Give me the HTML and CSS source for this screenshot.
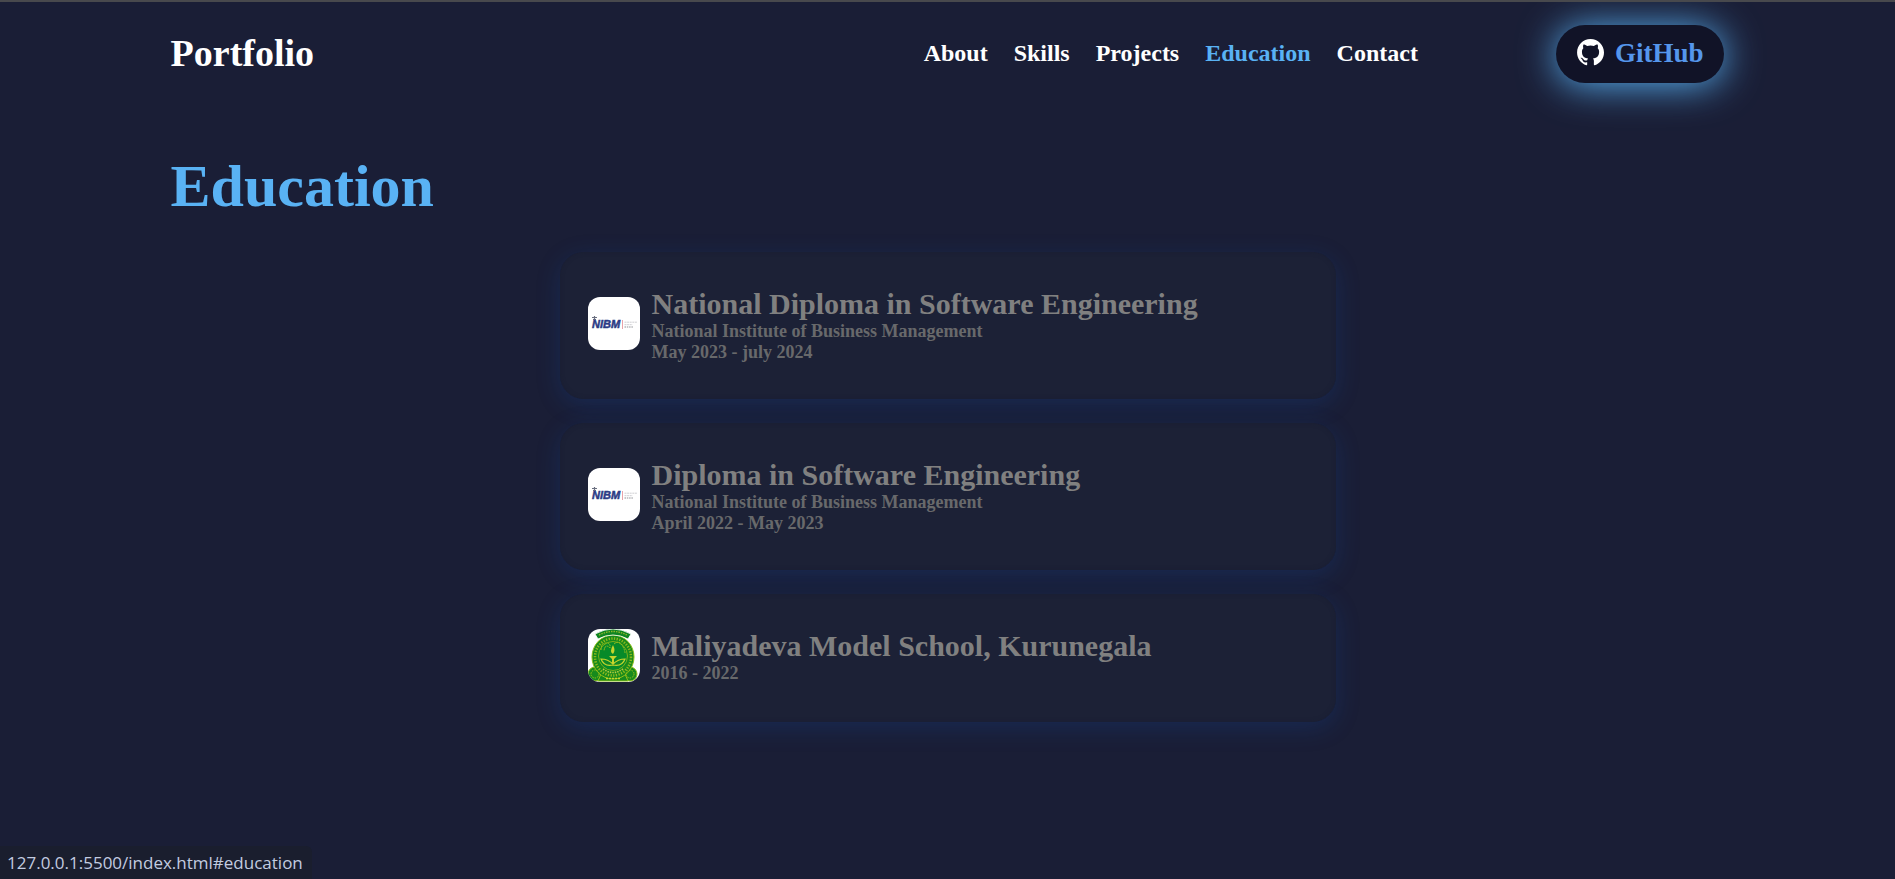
FILE: index.html
```html
<!DOCTYPE html>
<html lang="en">
<head>
<meta charset="utf-8">
<meta name="viewport" content="width=device-width, initial-scale=1">
<title>Portfolio</title>
<link rel="stylesheet" href="styles.css">
</head>
<body>
<header class="header">
  <a class="logo" href="#home">Portfolio</a>
  <nav class="nav">
    <a href="#about">About</a>
    <a href="#skills">Skills</a>
    <a href="#projects">Projects</a>
    <a class="active" href="#education">Education</a>
    <a href="#contact">Contact</a>
  </nav>
  <a class="github" href="#github">
    <svg class="github-icon" viewBox="2 2 20 20" aria-hidden="true"><path fill="#fff" fill-rule="evenodd" d="M12.026 2c-5.509 0-9.974 4.465-9.974 9.974 0 4.406 2.857 8.145 6.821 9.465.499.09.679-.217.679-.481 0-.237-.008-.865-.011-1.696-2.775.602-3.361-1.338-3.361-1.338-.452-1.152-1.107-1.459-1.107-1.459-.905-.619.069-.605.069-.605 1.002.07 1.527 1.028 1.527 1.028.89 1.524 2.336 1.084 2.902.829.091-.645.351-1.085.635-1.334-2.214-.251-4.542-1.107-4.542-4.93 0-1.087.389-1.979 1.024-2.675-.101-.253-.446-1.268.099-2.64 0 0 .837-.269 2.742 1.021a9.582 9.582 0 0 1 2.496-.336 9.554 9.554 0 0 1 2.496.336c1.906-1.291 2.742-1.021 2.742-1.021.545 1.372.203 2.387.099 2.64.64.696 1.024 1.587 1.024 2.675 0 3.833-2.33 4.675-4.552 4.922.355.308.675.916.675 1.846 0 1.334-.012 2.41-.012 2.737 0 .267.178.577.687.479C19.146 20.115 22 16.379 22 11.974 22 6.465 17.535 2 12.026 2z"/></svg>
    <span>GitHub</span>
  </a>
</header>
<main class="education" id="education">
  <h1>Education</h1>
  <div class="cards">
    <article class="card">
      <svg class="badge" viewBox="0 0 52 53" role="img" aria-label="NIBM">
        <rect width="52" height="53" fill="#fff"/>
        <path d="M4 20.500h5M6.500 19v4M5 22.500h3" stroke="#6b7080" stroke-width="1.200"/>
        <text class="nibm" x="4" y="31">NIBM</text>
        <path d="M34.500 23v9" stroke="#e9a3aa" stroke-width="1"/>
        <path d="M36.500 25.200h12.500M36.500 27.700h8" stroke="#c3c3c8" stroke-width=".8" stroke-dasharray="2 .6"/>
        <path d="M36.500 30h9" stroke="#8f9095" stroke-width="1.200" stroke-dasharray="1.500 .8"/>
      </svg>
      <div class="details">
        <h2>National Diploma in Software Engineering</h2>
        <p>National Institute of Business Management</p>
        <p>May 2023 - july 2024</p>
      </div>
    </article>
    <article class="card">
      <svg class="badge" viewBox="0 0 52 53" role="img" aria-label="NIBM">
        <rect width="52" height="53" fill="#fff"/>
        <path d="M4 20.500h5M6.500 19v4M5 22.500h3" stroke="#6b7080" stroke-width="1.200"/>
        <text class="nibm" x="4" y="31">NIBM</text>
        <path d="M34.500 23v9" stroke="#e9a3aa" stroke-width="1"/>
        <path d="M36.500 25.200h12.500M36.500 27.700h8" stroke="#c3c3c8" stroke-width=".8" stroke-dasharray="2 .6"/>
        <path d="M36.500 30h9" stroke="#8f9095" stroke-width="1.200" stroke-dasharray="1.500 .8"/>
      </svg>
      <div class="details">
        <h2>Diploma in Software Engineering</h2>
        <p>National Institute of Business Management</p>
        <p>April 2022 - May 2023</p>
      </div>
    </article>
    <article class="card">
      <svg class="badge" viewBox="0 0 52 53" role="img" aria-label="Maliyadeva Model School crest">
        <rect width="52" height="53" fill="#fff"/>
        <g fill="#178a1c" stroke="#8fbf18" stroke-width="1">
          <circle cx="7" cy="45" r="7"/><circle cx="42" cy="45" r="7"/>
          <path d="M13 45q12 6 24 0l3 7H10z"/>
          <ellipse cx="25" cy="28" rx="21" ry="22"/>
        </g>
        <path d="M7 5Q25-5 43 5l-3 5Q25 2 10 10z" fill="#0f8522" stroke="#fff" stroke-width=".8"/>
        <path d="M11 6Q25-1 39 6" fill="none" stroke="#8fb52a" stroke-width="1.400" stroke-dasharray="1.500 1"/>
        <ellipse cx="25" cy="28" rx="18" ry="18.500" fill="none" stroke="#8db91d" stroke-width="2.600" stroke-dasharray="1.300 1.400"/>
        <circle cx="25" cy="27" r="14.500" fill="#078a29" stroke="#7bb01b"/>
        <path d="M13 21q0-7 5-7t4 5q-5-5-6 3m10-7q5-4 8 1t3 8" fill="none" stroke="#93bd1d" stroke-width="1" stroke-dasharray="2 .7"/>
        <path d="M25 16q-4 7 0 9 3-3 0-9M21 27h8l-3 3v4h-2v-4z" fill="#c6d52c"/>
        <path d="M13 30q7 0 12 5 5-5 12-5-3 8-12 6-9 2-12-6z" fill="#118825" stroke="#c6d52c" stroke-width="1.200"/>
        <path d="M15 40q10 7 20 0" fill="none" stroke="#b9cd40" stroke-width="1.600" stroke-dasharray="1.500 1"/>
        <circle cx="7" cy="45" r="4" fill="none" stroke="#9fc11b" stroke-dasharray="1.500 1"/>
        <circle cx="42" cy="45" r="4" fill="none" stroke="#9fc11b" stroke-dasharray="1.500 1"/>
        <path d="M18 49.500h14" stroke="#c6d52c" stroke-width="1.600" stroke-dasharray="2 1"/>
      </svg>
      <div class="details">
        <h2>Maliyadeva Model School, Kurunegala</h2>
        <p>2016 - 2022</p>
      </div>
    </article>
  </div>
</main>
<div class="status">127.0.0.1:5500/index.html#education</div>
</body>
</html>
```

FILE: styles.css
```css
* {
  box-sizing: border-box;
  margin: 0;
  padding: 0;
}

body {
  min-height: 100vh;
  border-top: 2px solid #48494d;
  background: #1a1e36;
  color: #fff;
  font-family: "Liberation Serif", "Times New Roman", serif;
  font-weight: bold;
}

a {
  color: inherit;
  text-decoration: none;
}

.header {
  display: flex;
  align-items: center;
  padding: 23px 9% 26px;
}

.logo {
  padding-bottom: 2px;
  font-size: 38px;
}

.nav {
  display: flex;
  gap: 26px;
  margin: 0 138px 0 auto;
  padding-bottom: 2px;
  font-size: 24px;
}

.nav .active {
  color: #59b2f4;
}

.github {
  display: flex;
  align-items: center;
  gap: 11px;
  height: 58px;
  padding: 0 21px 2px;
  border-radius: 29px;
  background: #111327;
  box-shadow: 0 2px 38px #59b2f4;
  color: #5596ec;
  font-size: 27px;
}

.github-icon {
  width: 27px;
  height: 27px;
  margin-bottom: 2px;
}

.education {
  padding: 43px 9% 80px;
}

h1 {
  color: #59b2f4;
  font-size: 60px;
  line-height: 69px;
}

.cards {
  display: flex;
  flex-direction: column;
  gap: 24px;
  max-width: 776px;
  margin: 31px auto 0;
}

.card {
  display: flex;
  align-items: flex-start;
  gap: 12px;
  padding: 35px 28px 36px;
  border-radius: 24px;
  background: #1c2136;
  box-shadow: 0 6px 24px rgba(20, 80, 180, 0.22), inset 0 0 4px #1a1e32;
}

.badge {
  flex: none;
  align-self: center;
  width: 52px;
  height: 53px;
  margin-bottom: 4px;
  border-radius: 12px;
}

.nibm {
  fill: #2b3b85;
  stroke: #2b3b85;
  stroke-width: 0.5px;
  font: italic bold 11px "Liberation Sans", Arial, sans-serif;
}

.details h2 {
  color: #808080;
  font-size: 30px;
  line-height: 34px;
}

.details p {
  color: #68696b;
  font-size: 18px;
  line-height: 21px;
}

.status {
  position: fixed;
  bottom: 0;
  left: 0;
  padding: 5px 9px 5px 7px;
  border-top-right-radius: 6px;
  background: #1a1e2e;
  color: #c3cce0;
  font: 17px/23px "Open Sans", "Noto Sans", sans-serif;
}
```
